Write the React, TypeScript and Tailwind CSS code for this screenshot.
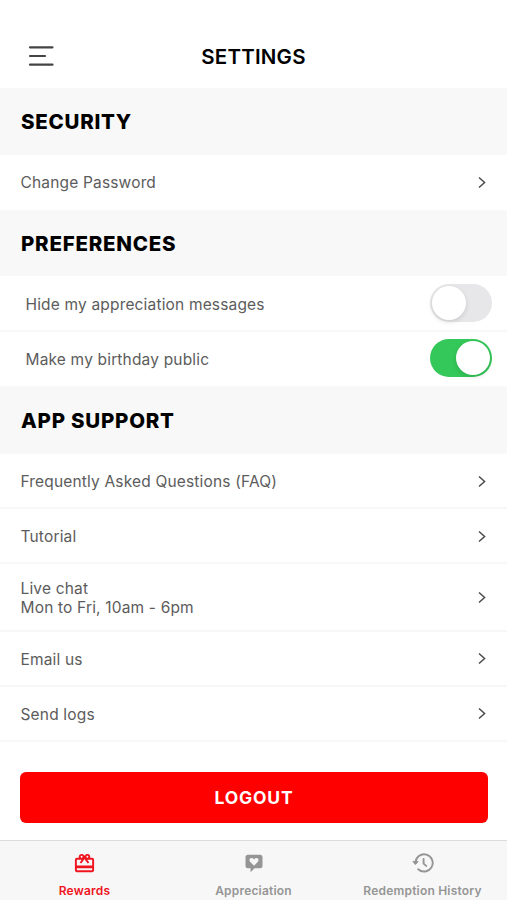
import type { ReactNode } from 'react';
import { MdOutlineRedeem } from 'react-icons/md';

function SectionTitle({ children, className }: { children: ReactNode; className: string }) {
  return (
    <h2 className={`flex items-center bg-[#f8f8f8] pl-[21px] text-[20.5px] font-extrabold tracking-[0.75px] text-black ${className}`}>
      {children}
    </h2>
  );
}

function LinkRow({ children, className }: { children: ReactNode; className: string }) {
  return (
    <div className={`flex items-center justify-between pr-5 pl-[20.5px] ${className}`}>
      <span>{children}</span>
      <svg width="10" height="14" viewBox="0 0 10 14" fill="none" stroke="#4b4b4b" strokeWidth="1.5">
        <path d="M2 1.500l5.600 5L2 11.500" />
      </svg>
    </div>
  );
}

function ToggleRow({ label, on, className }: { label: string; on: boolean; className: string }) {
  return (
    <div className={`flex items-center justify-between pr-[15px] pl-[25.5px] ${className}`}>
      <span className="pt-[2px]">{label}</span>
      <span className={`flex h-[38px] w-[62px] items-center rounded-full p-[2px] ${on ? 'justify-end bg-[#34c759]' : 'justify-start bg-[#e7e7e9]'}`}>
        <span className="size-[34px] rounded-full bg-white shadow-[0_2px_5px_rgba(0,0,0,0.12)]" />
      </span>
    </div>
  );
}

function Tab({ icon, label, className }: { icon: ReactNode; label: string; className: string }) {
  return (
    <div className={`flex flex-1 flex-col items-center pt-[10px] ${className}`}>
      <div className="flex h-6 items-center">{icon}</div>
      <span className="mt-[8px] text-[12px] leading-4 font-semibold tracking-[0.2px] whitespace-nowrap">{label}</span>
    </div>
  );
}

export default function App() {
  return (
    <div className="flex h-[900px] w-[507px] flex-col overflow-hidden bg-white font-['Inter',sans-serif] text-[15.5px] leading-[19px] tracking-[0.17px] text-[#5c5c5c]">
      <header className="grid h-[88px] grid-cols-[1fr_auto_1fr] items-center pt-[26px]">
        <svg className="-mt-[2px] ml-[28px]" width="26" height="22" viewBox="0 0 26 22" fill="none" stroke="#444" strokeWidth="2.2" strokeLinecap="round">
          <path d="M2 2.300h22.500M2 11h15M2 19.700h22.500" />
        </svg>
        <h1 className="-mt-[2px] text-[20.5px] font-semibold tracking-[0.2px] text-black">SETTINGS</h1>
      </header>

      <SectionTitle className="h-[67px]">SECURITY</SectionTitle>
      <LinkRow className="h-[55px]">Change Password</LinkRow>

      <SectionTitle className="h-[66px]">PREFERENCES</SectionTitle>
      <ToggleRow className="h-[56px] border-b-2 border-[#f7f7f7]" label="Hide my appreciation messages" on={false} />
      <ToggleRow className="h-[54px] pb-[2px]" label="Make my birthday public" on />

      <SectionTitle className="h-[68px]">APP SUPPORT</SectionTitle>
      <LinkRow className="h-[55px] border-b-2 border-[#f7f7f7] pt-[2px]">Frequently Asked Questions (FAQ)</LinkRow>
      <LinkRow className="h-[55px] border-b-2 border-[#f7f7f7] pt-[2px]">Tutorial</LinkRow>
      <LinkRow className="h-[68px] border-b-2 border-[#f7f7f7] pt-[2px]">
        Live chat
        <br />
        Mon to Fri, 10am - 6pm
      </LinkRow>
      <LinkRow className="h-[55px] border-b-2 border-[#f7f7f7] pt-px">Email us</LinkRow>
      <LinkRow className="h-[55px] border-b-2 border-[#f7f7f7] pt-px">Send logs</LinkRow>

      <div className="flex h-[98px] pt-[30px] pr-[19px] pl-5">
        <button className="h-[51px] w-full rounded-[6px] bg-[#ff0000] text-[17.5px] font-bold tracking-[0.8px] text-white">LOGOUT</button>
      </div>

      <nav className="flex flex-1 border-t border-[#dcdcdc] bg-[#f7f7f7]">
        <Tab className="text-[#f0141e]" icon={<MdOutlineRedeem size={23} />} label="Rewards" />
        <Tab
          className="text-[#959595]"
          icon={
            <svg width="18" height="19" viewBox="0 0 18 19">
              <path d="M3 .8h12a2.500 2.500 0 0 1 2.500 2.500v8.400a2.500 2.500 0 0 1-2.500 2.500H9.500L5.600 18.300v-4.100H3A2.500 2.500 0 0 1 .5 11.700V3.300A2.500 2.500 0 0 1 3 .8z" fill="currentColor" />
              <path d="M9 11.800 5.300 8.100C3.600 6.200 4.700 4 6.500 4c1.100 0 2 .6 2.500 1.500C9.500 4.600 10.400 4 11.500 4c1.800 0 2.900 2.200 1.200 4.100z" fill="#f7f7f7" />
            </svg>
          }
          label="Appreciation"
        />
        <Tab
          className="text-[#959595]"
          icon={
            <svg width="22" height="20" viewBox="0 0 22 20" fill="none" stroke="currentColor" strokeWidth="1.9" strokeLinecap="round" strokeLinejoin="round">
              <path d="M3.500 9.800A8.600 8.600 0 1 1 6.200 16.200" />
              <path d="M11.600 6v4.600l2.600 2.300" />
              <path d="M1.300 8.600h4.800L3.600 11.300z" fill="currentColor" strokeWidth="1" />
            </svg>
          }
          label="Redemption History"
        />
      </nav>
    </div>
  );
}
